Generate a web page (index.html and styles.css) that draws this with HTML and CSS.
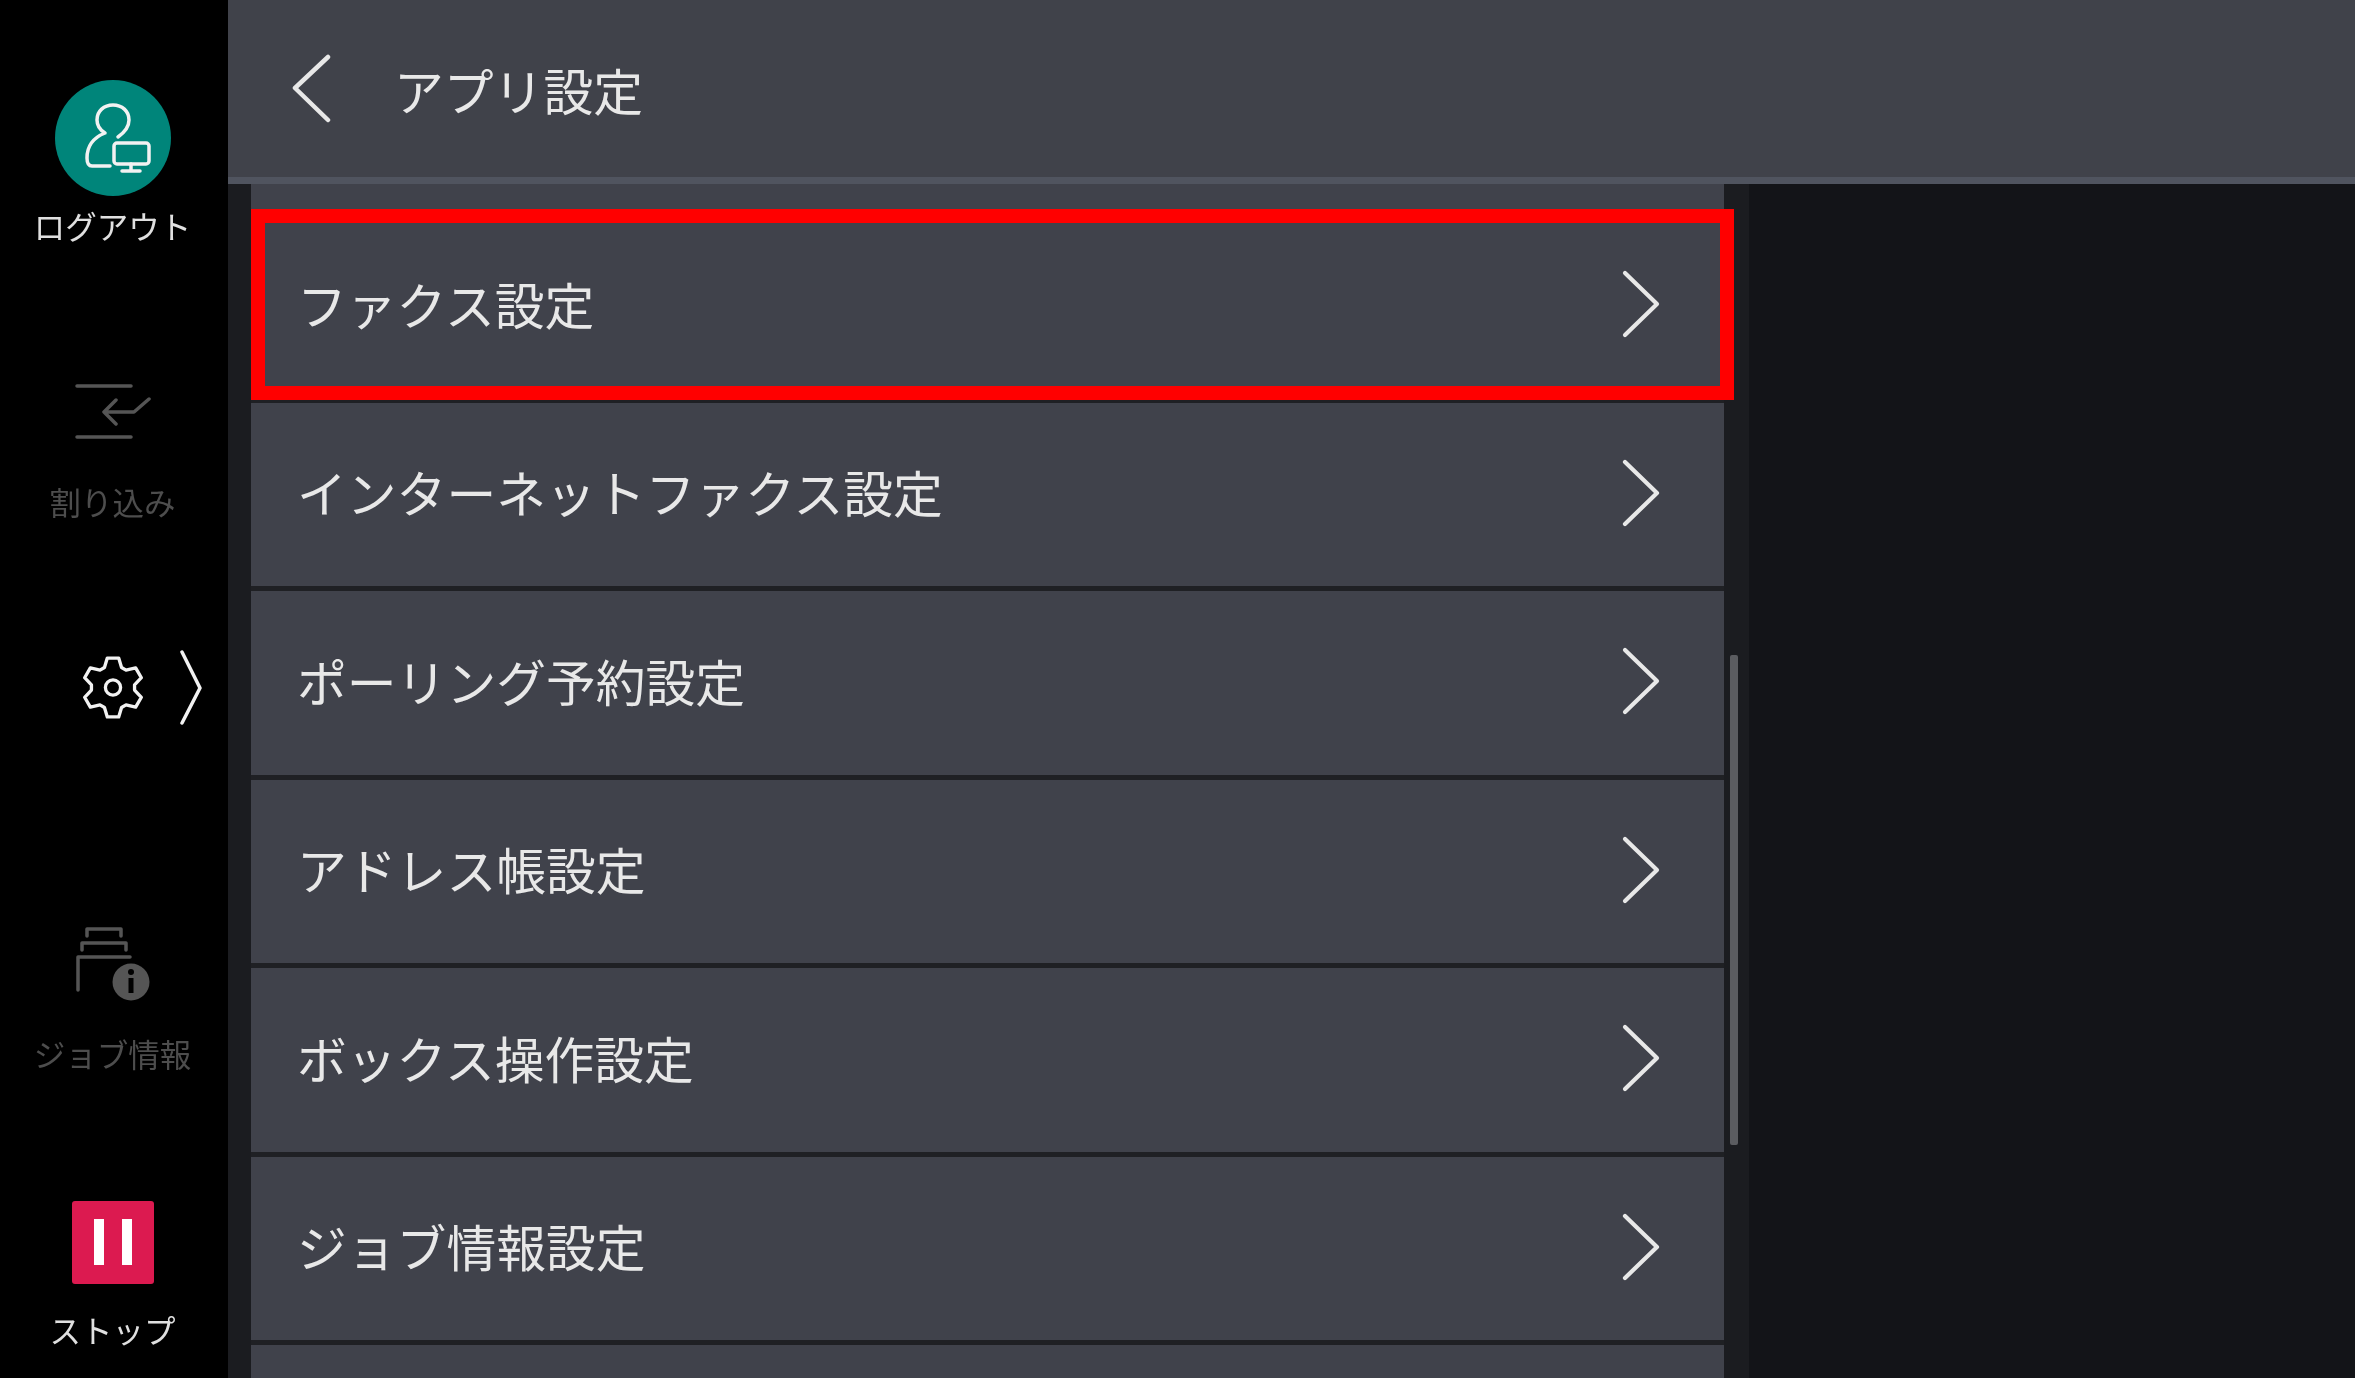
FILE: index.html
```html
<!DOCTYPE html>
<html lang="ja">
<head>
  <meta charset="UTF-8" />
  <title>アプリ設定</title>
  <link rel="stylesheet" href="styles.css">
</head>
<body>
  <div class="app">
    <nav class="sidebar">
      <div class="side-item">
        <svg class="side-icon" viewBox="0 0 228 116">
          <circle cx="113" cy="58" r="58" fill="#00857a" />
          <g class="stroke-white">
            <path d="M118 57C125 52 129 46 129 40C129 31 122 25 113 25C104 25 97 31 97 40C97 45 100 50 105 53C95 57 87 64 87 78Q87 86 92 86H110" />
            <rect x="114" y="63" width="35" height="21" rx="3" />
            <path d="M131 84V91M122 91H140" />
          </g>
        </svg>
        <span class="side-label">ログアウト</span>
      </div>
      <div class="side-item off">
        <svg class="side-icon" viewBox="0 0 228 116">
          <g class="stroke-grey">
            <path d="M77 30H131M77 81H131" />
            <path d="M149 43L134 56H104M116 44L104 56L116 68" />
          </g>
        </svg>
        <span class="side-label">割り込み</span>
      </div>
      <div class="side-item">
        <svg class="side-icon" viewBox="0 0 228 116">
          <g class="stroke-white" transform="translate(113 55.5) scale(0.95)">
            <path d="M-9 -21L-6 -31L6 -31L9 -21L13.69 -18.29L23.85 -20.7L29.85 -10.3L22.69 -2.71L22.69 2.71L29.85 10.3L23.85 20.7L13.69 18.29L9 21L6 31L-6 31L-9 21L-13.69 18.29L-23.85 20.7L-29.85 10.3L-22.69 2.71L-22.69 -2.71L-29.85 -10.3L-23.85 -20.7L-13.69 -18.29Z" />
            <circle r="8" />
          </g>
          <path class="stroke-white" d="M182 20L200 56L182 91" />
        </svg>
      </div>
      <div class="side-item off">
        <svg class="side-icon" viewBox="0 0 228 116">
          <g class="stroke-grey">
            <path d="M87 28V21H121V28M82 42V35H126V42M78 82V49H130" />
          </g>
          <circle cx="131" cy="74" r="18.5" fill="#555" />
          <circle cx="131" cy="64" r="3" fill="#000" />
          <rect x="128.5" y="70" width="5" height="15" fill="#000" />
        </svg>
        <span class="side-label">ジョブ情報</span>
      </div>
      <div class="side-item">
        <svg class="side-icon" viewBox="0 0 228 116">
          <rect x="72" y="17" width="82" height="83" rx="3" fill="#dc1a50" />
          <rect x="94" y="35" width="10" height="46" fill="#fff" />
          <rect x="122" y="35" width="10" height="46" fill="#fff" />
        </svg>
        <span class="side-label">ストップ</span>
      </div>
    </nav>

    <main class="main">
      <header class="top-bar">
        <svg class="back-icon" viewBox="0 0 40 70">
          <path d="M36 3L3 34L36 66" />
        </svg>
        <h1 class="page-title">アプリ設定</h1>
      </header>

      <div class="content">
        <div class="track-left"></div>
        <div class="menu">
          <div class="menu-row stub"></div>
          <div class="menu-row selected">
            <span>ファクス設定</span>
            <svg class="row-arrow" viewBox="0 0 40 70"><path d="M4 4L36 35L4 66" /></svg>
          </div>
          <div class="menu-row">
            <span>インターネットファクス設定</span>
            <svg class="row-arrow" viewBox="0 0 40 70"><path d="M4 4L36 35L4 66" /></svg>
          </div>
          <div class="menu-row">
            <span>ポーリング予約設定</span>
            <svg class="row-arrow" viewBox="0 0 40 70"><path d="M4 4L36 35L4 66" /></svg>
          </div>
          <div class="menu-row">
            <span>アドレス帳設定</span>
            <svg class="row-arrow" viewBox="0 0 40 70"><path d="M4 4L36 35L4 66" /></svg>
          </div>
          <div class="menu-row">
            <span>ボックス操作設定</span>
            <svg class="row-arrow" viewBox="0 0 40 70"><path d="M4 4L36 35L4 66" /></svg>
          </div>
          <div class="menu-row">
            <span>ジョブ情報設定</span>
            <svg class="row-arrow" viewBox="0 0 40 70"><path d="M4 4L36 35L4 66" /></svg>
          </div>
          <div class="menu-row tail"></div>
        </div>
        <div class="track-right"><div class="thumb"></div></div>
        <div class="empty-pane"></div>
      </div>
    </main>
  </div>
</body>
</html>
```

FILE: styles.css
```css
html, body {
  margin: 0;
  height: 100%;
  overflow: hidden;
  background: #000;
}
body {
  font-family: "Noto Sans CJK JP", "Noto Sans", sans-serif;
  color: #e8e8e8;
}
.app {
  display: flex;
  height: 1378px;
  overflow: hidden;
}

/* left bar */
.sidebar {
  width: 228px;
  flex-shrink: 0;
  background: #000;
}
.side-item {
  height: 276px;
  padding-top: 80px;
  box-sizing: border-box;
  text-align: center;
}
.side-item:last-child {
  height: 274px;
}
.side-icon {
  display: block;
  width: 228px;
  height: 116px;
  filter: blur(0.6px);
}
.side-label {
  display: block;
  margin-top: 9px;
  font-size: 31.5px;
  line-height: 40px;
  color: #e0e0e0;
  padding-right: 3px;
  white-space: nowrap;
  filter: blur(0.6px);
}
.off .side-label {
  color: #4d4d4d;
}
.stroke-white {
  fill: none;
  stroke: #f2f2f2;
  stroke-width: 3.5;
  stroke-linecap: round;
  stroke-linejoin: round;
}
.stroke-grey {
  fill: none;
  stroke: #555;
  stroke-width: 3.5;
  stroke-linecap: round;
  stroke-linejoin: round;
}

/* header */
.main {
  flex: 1;
  display: flex;
  flex-direction: column;
  min-width: 0;
}
.top-bar {
  height: 184px;
  box-sizing: border-box;
  flex-shrink: 0;
  display: flex;
  align-items: center;
  background: #40424a;
  border-bottom: 7px solid #50545f;
  padding-left: 64px;
}
.back-icon {
  width: 40px;
  height: 70px;
  margin-right: 62px;
  fill: none;
  stroke: #e8e8e8;
  stroke-width: 4.5;
  stroke-linecap: round;
  stroke-linejoin: round;
  filter: blur(0.6px);
}
.page-title {
  margin: 0;
  font-size: 49.8px;
  font-weight: 400;
  line-height: 70px;
  filter: blur(0.6px);
}

/* list */
.content {
  flex: 1;
  display: flex;
  min-height: 0;
}
.track-left {
  width: 23px;
  flex-shrink: 0;
  background: #1b1c20;
}
.menu {
  width: 1473px;
  flex-shrink: 0;
}
.menu-row {
  position: relative;
  height: 188.5px;
  box-sizing: border-box;
  display: flex;
  align-items: center;
  justify-content: space-between;
  background: #40424b;
  border-bottom: 5px solid #1f2024;
  padding: 0 63px 0 46px;
  font-size: 49.8px;
  white-space: nowrap;
}
.menu-row span {
  margin-top: -6px;
  filter: blur(0.6px);
}
.menu-row.stub {
  height: 30px;
}
.menu-row.tail {
  height: 33px;
  border-bottom: 0;
}
.menu-row.selected::after {
  content: "";
  position: absolute;
  top: -5px;
  left: 0;
  right: -10px;
  bottom: -2.5px;
  border: 14px solid #f00;
}
.row-arrow {
  width: 40px;
  height: 70px;
  margin-top: -3px;
  fill: none;
  stroke: #e8e8e8;
  stroke-width: 4.2;
  stroke-linecap: round;
  stroke-linejoin: round;
  filter: blur(0.6px);
}
.track-right {
  width: 25px;
  flex-shrink: 0;
  padding-top: 471px;
  background: #1b1c20;
}
.thumb {
  width: 8px;
  height: 490px;
  margin-left: 6px;
  border-radius: 2px;
  background: #5b5c60;
}
.empty-pane {
  flex: 1;
  background: #131418;
}
```
